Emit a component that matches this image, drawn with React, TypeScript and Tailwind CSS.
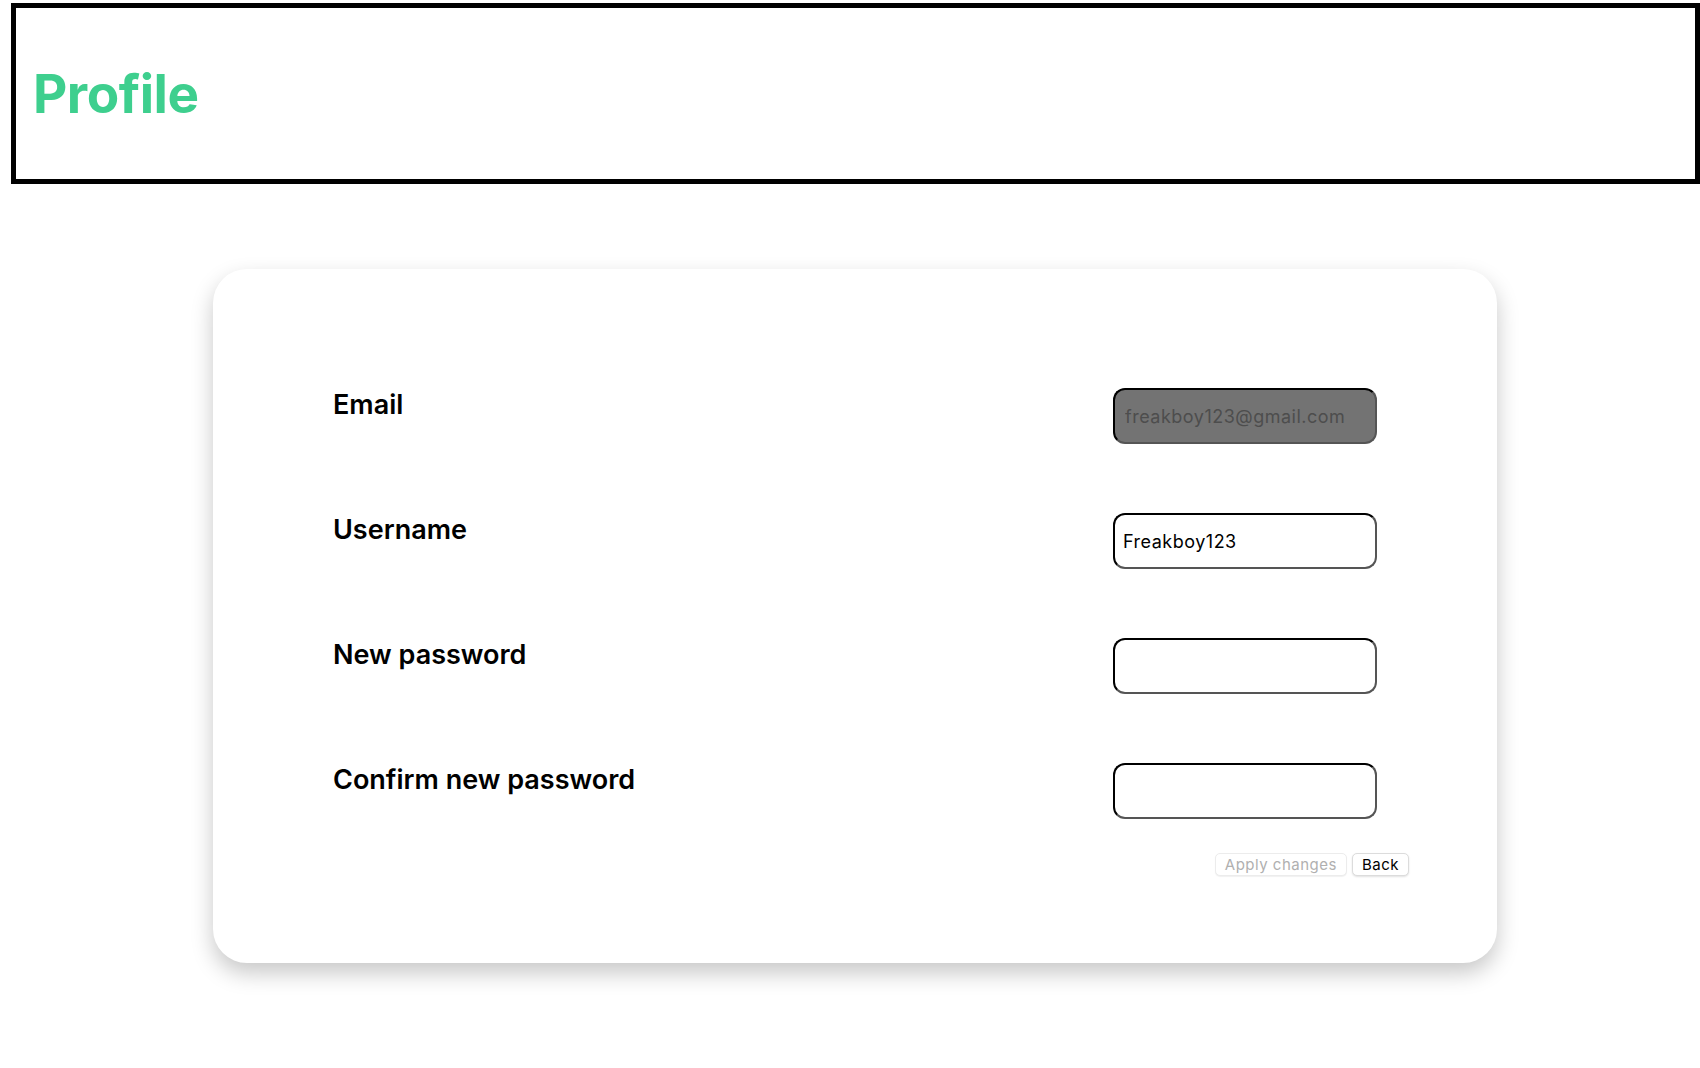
import { useState } from "react";

const fields = [
  { label: "Email", type: "email", key: "email", disabled: true },
  { label: "Username", type: "text", key: "username", disabled: false },
  { label: "New password", type: "password", key: "password", disabled: false },
  { label: "Confirm new password", type: "password", key: "confirm", disabled: false },
];

export default function App() {
  const [values, setValues] = useState<Record<string, string>>({
    email: "freakboy123@gmail.com",
    username: "Freakboy123",
    password: "",
    confirm: "",
  });

  return (
    <div className="min-h-screen bg-white font-['Inter',sans-serif] pt-[3px] pl-[11px] pb-[105px]">
      {/* Header */}
      <header className="h-[181px] border-[5px] border-black flex items-center pl-[17px]">
        <h1 className="text-[53px] font-bold text-[#3ECF8E] leading-none tracking-[-0.5px] mt-[2px]">
          Profile
        </h1>
      </header>

      {/* Card */}
      <div className="mt-[85px] ml-[202px] w-[1284px] h-[694px] bg-white rounded-[34px] shadow-[0_10px_22px_rgba(0,0,0,0.22)] px-[88px] pt-[119px]">
        <div className="flex flex-col gap-[69px] px-[32px]">
          {fields.map((field) => (
            <div key={field.key} className="flex justify-between items-start h-[56px]">
              <label className="text-[27px] font-semibold text-black leading-none pt-[3px]">
                {field.label}
              </label>
              <input
                type={field.type}
                disabled={field.disabled}
                value={values[field.key]}
                onChange={(e) =>
                  setValues({ ...values, [field.key]: e.target.value })
                }
                className={
                  field.disabled
                    ? "w-[264px] h-[56px] rounded-[12px] border-[2.5px] border-t-black border-l-black border-r-[#555] border-b-[#555] bg-[#737373] px-[10px] text-[18px] tracking-[0.5px] text-[#4d4d4d] outline-none"
                    : "w-[264px] h-[56px] rounded-[12px] border-[2.5px] border-t-black border-l-black border-r-[#555] border-b-[#555] bg-white px-[8px] text-[18px] tracking-[0.5px] text-black outline-none"
                }
              />
            </div>
          ))}
        </div>

        <div className="flex justify-end gap-[5px] mt-[34px]">
          <button
            disabled
            className="h-[23px] px-[9px] rounded-[5px] border border-[#ececec] bg-white text-[15px] tracking-[0.5px] text-[#b0b0b0] leading-none shadow-[0_1px_1px_rgba(0,0,0,0.06)]"
          >
            Apply changes
          </button>
          <button className="h-[23px] px-[9px] rounded-[5px] border border-[#dcdcdc] bg-white text-[15px] tracking-[0.5px] text-black leading-none shadow-[0_1px_2px_rgba(0,0,0,0.12)]">
            Back
          </button>
        </div>
      </div>
    </div>
  );
}
